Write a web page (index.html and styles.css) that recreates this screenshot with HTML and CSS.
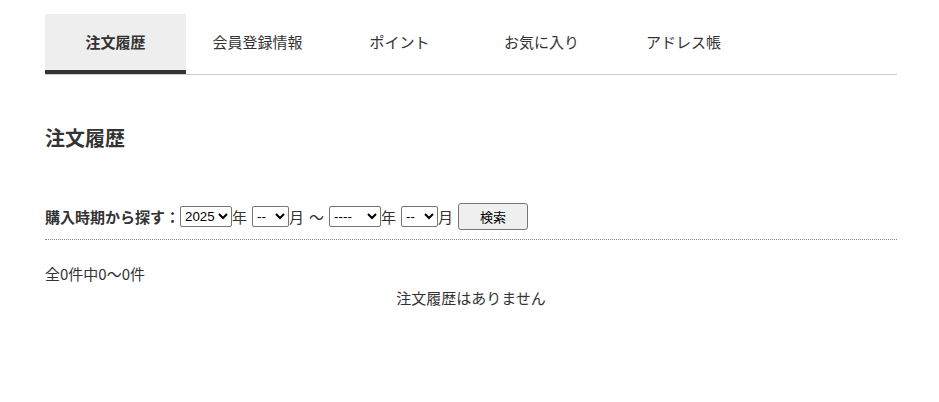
FILE: index.html
```html
<!DOCTYPE html>
<html lang="ja">
<head>
<meta charset="utf-8">
<link rel="stylesheet" href="styles.css">
</head>
<body>
<div class="page">
  <ul class="tabs">
    <li class="tab active">注文履歴</li>
    <li class="tab">会員登録情報</li>
    <li class="tab">ポイント</li>
    <li class="tab">お気に入り</li>
    <li class="tab">アドレス帳</li>
  </ul>
  <h2 class="title">注文履歴</h2>
  <form class="search">
    <span class="label">購入時期から探す：</span>
    <select class="sel sel-y"><option>2025</option></select>
    <span class="unit">年</span>
    <select class="sel sel-m gap"><option>--</option></select>
    <span class="unit">月</span>
    <span class="tilde">～</span>
    <select class="sel sel-y"><option>----</option></select>
    <span class="unit">年</span>
    <select class="sel sel-m gap"><option>--</option></select>
    <span class="unit">月</span>
    <button type="button" class="btn">検索</button>
  </form>
  <p class="count">全0件中0～0件</p>
  <p class="empty">注文履歴はありません</p>
</div>
</body>
</html>
```
FILE: styles.css
```css
html, body {
  margin: 0;
  padding: 0;
  background: #fff;
}
body {
  font-family: "Noto Sans CJK JP", "Noto Sans", sans-serif;
  color: #333;
  font-size: 15px;
}
.page {
  margin: 0 42px 0 45px;
  padding-top: 14px;
}
.tabs {
  list-style: none;
  margin: 0;
  padding: 0;
  display: flex;
  border-bottom: 1px solid #ccc;
}
.tab {
  width: 141px;
  margin-right: 1px;
  height: 54px;
  padding-bottom: 2px;
  border-bottom: 4px solid transparent;
  display: flex;
  align-items: center;
  justify-content: center;
  font-size: 15px;
  line-height: 1;
}
.tab.active {
  background: #eeeeee;
  border-bottom-color: #333;
  font-weight: bold;
}
.title {
  margin: 49px 0 0;
  font-size: 20px;
  font-weight: bold;
  line-height: 28px;
}
.search {
  margin-top: 51px;
  padding-bottom: 9px;
  border-bottom: 1px dotted #888;
  display: flex;
  align-items: center;
  font-size: 15px;
  line-height: 20px;
}
.label {
  font-weight: bold;
  flex-shrink: 0;
}
.sel {
  flex-shrink: 0;
  font-family: "Liberation Sans", Arial, sans-serif;
  font-size: 13.33px;
  height: 21px;
  padding: 0;
  color: #000;
  border: 1px solid #767676;
  border-radius: 2px;
  background: #fff;
}
.sel.gap {
  margin-left: 5px;
}
.sel-m {
  width: 37px;
}
.sel-y {
  width: 52px;
}
.tilde {
  margin: 0 5px;
}
.btn {
  margin-left: 5px;
  width: 70px;
  height: 27px;
  font-family: "Noto Sans CJK JP", sans-serif;
  font-size: 13px;
  color: #000;
  background: #efefef;
  border: 1px solid #767676;
  border-radius: 3px;
  padding: 0;
}
.count {
  margin: 23px 0 0;
  line-height: 22px;
}
.empty {
  margin: 2px 0 0;
  text-align: center;
  line-height: 22px;
}
```
